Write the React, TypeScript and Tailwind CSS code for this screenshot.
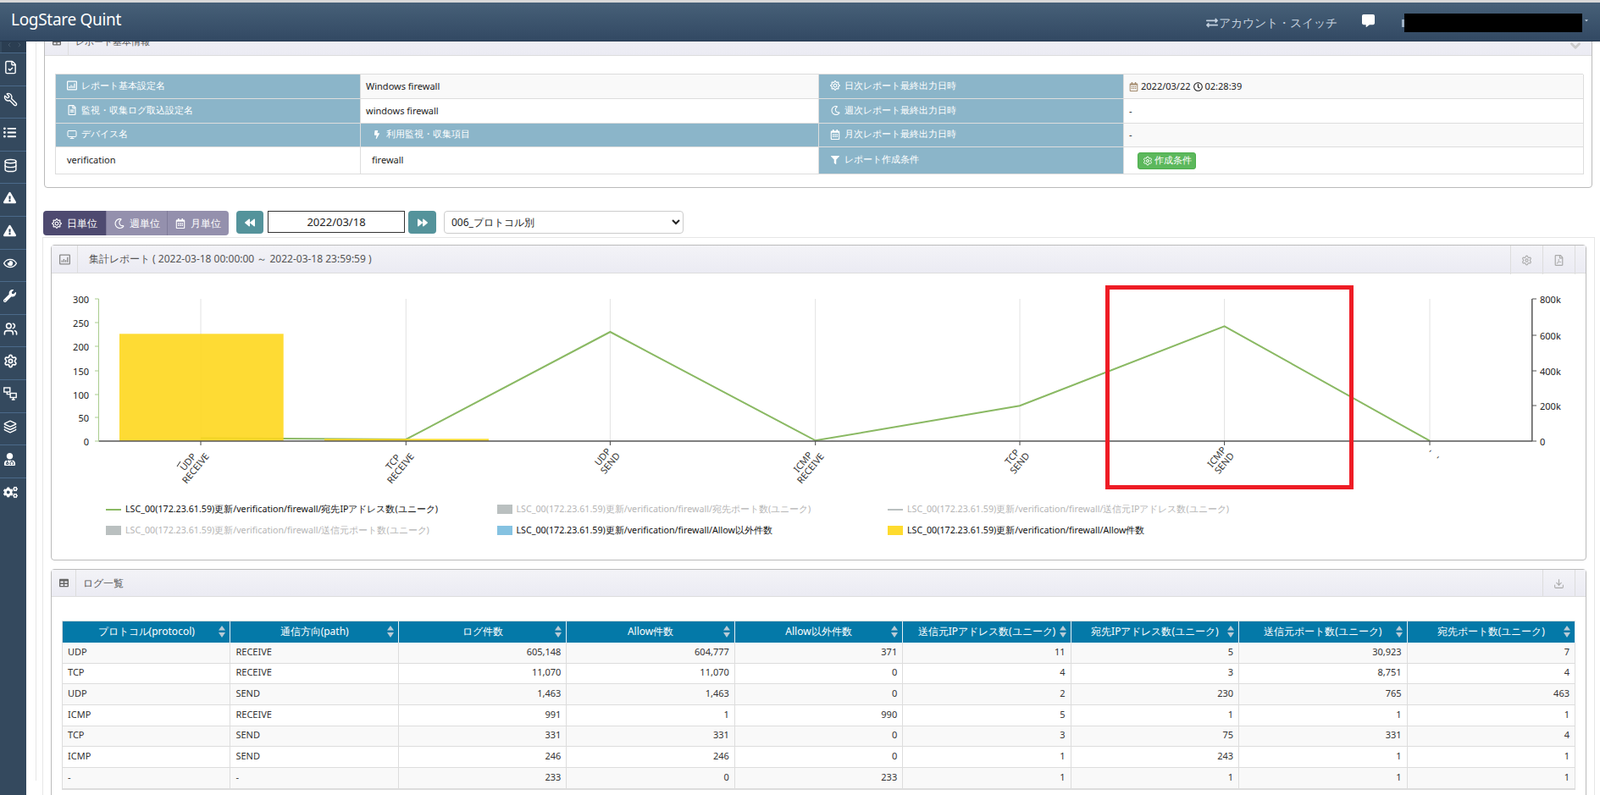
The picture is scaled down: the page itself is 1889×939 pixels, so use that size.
import React from "react";
import {
  FaRegSun, FaRegMoon, FaRegCalendarAlt, FaRegFileAlt, FaBolt, FaFilter, FaTable,
  FaRegFilePdf, FaRegClock, FaExchangeAlt, FaCommentAlt, FaBackward, FaForward, FaWrench, FaListUl,
  FaUserMd, FaCogs, FaCaretDown, FaExclamationTriangle, FaRegEye,
} from "react-icons/fa";
import { FileCheck, Wrench, Database, Users, Settings, Layers, Download, ChevronDown, ChevronLeft, ChevronRight, Monitor } from "lucide-react";

function ChartBox({ size = 12 }: { size?: number }) {
  return (
    <svg width={size} height={size} viewBox="0 0 12 12" fill="none">
      <rect x="0.6" y="1.1" width="10.8" height="9.8" rx="0.6" stroke="currentColor" strokeWidth="1.2" />
      <path d="M3 9V7M5 9V5.5M7 9V6.5M9 9V3.5" stroke="currentColor" strokeWidth="1.2" />
    </svg>
  );
}

function Monitors() {
  return (
    <svg width="16" height="16" viewBox="0 0 16 16" fill="none" stroke="currentColor" strokeWidth="1.4">
      <rect x="0.8" y="1" width="7" height="5" />
      <rect x="8.2" y="7.5" width="7" height="5" />
      <path d="M4.3 6v2.6H8M11.7 12.5v2M9.8 15h3.8" />
    </svg>
  );
}

const sideIcons = [
  <FileCheck size={17} strokeWidth={2} />,
  <Wrench size={17} strokeWidth={2} className="-scale-x-100" />,
  <FaListUl size={15} />,
  <Database size={17} strokeWidth={2} />,
  <FaExclamationTriangle size={15} />,
  <FaExclamationTriangle size={15} />,
  <FaRegEye size={16} />,
  <FaWrench size={15} />,
  <Users size={17} strokeWidth={2.2} />,
  <Settings size={17} strokeWidth={2.4} />,
  <Monitors />,
  <Layers size={16} strokeWidth={2.2} />,
  <FaUserMd size={15} />,
  <FaCogs size={17} />,
];

const ticks = [237, 479.3, 720.4, 962.7, 1204, 1445.6, 1688];
const xLabels: [string, string, number, number][] = [
  ["UDP", "RECEIVE", 226, 549],
  ["TCP", "RECEIVE", 468, 549],
  ["UDP", "SEND", 715.5, 543],
  ["ICMP", "RECEIVE", 952, 549],
  ["TCP", "SEND", 1199, 543],
  ["ICMP", "SEND", 1440.5, 543],
  ["-", "-", 1692, 535.5],
];
const leftTicks: [string, number][] = [["300", 353], ["250", 381], ["200", 409], ["150", 438], ["100", 466], ["50", 493], ["0", 521]];
const rightTicks: [string, number][] = [["800k", 353], ["600k", 396], ["400k", 438], ["200k", 479], ["0", 521]];

const legend: { t: string; on: boolean; kind: "line" | "box"; c: string }[] = [
  { t: "LSC_00(172.23.61.59)更新/verification/firewall/宛先IPアドレス数(ユニーク)", on: true, kind: "line", c: "#8ab963" },
  { t: "LSC_00(172.23.61.59)更新/verification/firewall/宛先ポート数(ユニーク)", on: false, kind: "box", c: "#bac0c0" },
  { t: "LSC_00(172.23.61.59)更新/verification/firewall/送信元IPアドレス数(ユニーク)", on: false, kind: "line", c: "#bac0c0" },
  { t: "LSC_00(172.23.61.59)更新/verification/firewall/送信元ポート数(ユニーク)", on: false, kind: "box", c: "#bac0c0" },
  { t: "LSC_00(172.23.61.59)更新/verification/firewall/Allow以外件数", on: true, kind: "box", c: "#85c2e1" },
  { t: "LSC_00(172.23.61.59)更新/verification/firewall/Allow件数", on: true, kind: "box", c: "#fedb2e" },
];

const cols = ["プロトコル(protocol)", "通信方向(path)", "ログ件数", "Allow件数", "Allow以外件数", "送信元IPアドレス数(ユニーク)", "宛先IPアドレス数(ユニーク)", "送信元ポート数(ユニーク)", "宛先ポート数(ユニーク)"];
const rows = [
  ["UDP", "RECEIVE", "605,148", "604,777", "371", "11", "5", "30,923", "7"],
  ["TCP", "RECEIVE", "11,070", "11,070", "0", "4", "3", "8,751", "4"],
  ["UDP", "SEND", "1,463", "1,463", "0", "2", "230", "765", "463"],
  ["ICMP", "RECEIVE", "991", "1", "990", "5", "1", "1", "1"],
  ["TCP", "SEND", "331", "331", "0", "3", "75", "331", "4"],
  ["ICMP", "SEND", "246", "246", "0", "1", "243", "1", "1"],
  ["-", "-", "233", "0", "233", "1", "1", "1", "1"],
];

function Sort() {
  return (
    <svg width="8" height="14" viewBox="0 0 8 14" className="absolute right-[5px] top-[5px]">
      <path d="M4 0 L8 5.5 H0 Z M4 14 L8 8 H0 Z" fill="#b9cbd6" />
    </svg>
  );
}

function Label({ icon, text, className = "" }: { icon: React.ReactNode; text: string; className?: string }) {
  return (
    <div className={"bg-[#8bb5c9] text-white flex items-center gap-[5px] pl-[13px] pb-[2px] border-r border-b border-[#ddd] " + className}>
      <span className="w-[12px] flex justify-center">{icon}</span>
      <span>{text}</span>
    </div>
  );
}

function PanelHeader({ icon, cellW }: { icon: React.ReactNode; cellW: string }) {
  return (
    <div className={"flex items-center text-[#555] " + cellW}>
      <span className="w-full flex justify-center">{icon}</span>
    </div>
  );
}

export default function App() {
  return (
    <div className="w-full h-[939px] overflow-hidden bg-white flex flex-col font-['Noto_Sans','Noto_Sans_CJK_JP',sans-serif] text-[11px] text-[#333]">
      <div className="h-[3px] bg-[#d9d9d9]" />
      <header className="h-[46px] shrink-0 bg-gradient-to-b from-[#476078] to-[#324963] border-b border-[#25374d] flex items-center relative z-10 text-white">
        <div className="pl-[13px] text-[19px] leading-none mt-[-5px] font-['Open_Sans',sans-serif] tracking-[-0.3px]">LogStare Quint</div>
        <div className="ml-auto flex items-center h-full">
          <div className="flex items-center text-[#c3d0de] text-[14.3px] leading-none mt-[3px]">
            <FaExchangeAlt size={14} className="mr-[1px]" />
            <span>アカウント・スイッチ</span>
          </div>
          <FaCommentAlt size={15} className="ml-[29px] mt-[-2px] text-white" />
          <div className="ml-[32px] w-[3px] h-[9px] bg-[#9fb2c6] mt-[3px]" />
          <div className="w-[210px] h-[22px] bg-black mt-[3px]" />
          <FaCaretDown size={6} className="ml-[2px] mr-[13px] mt-[-4px] text-[#c3d0de]" />
        </div>
      </header>

      <div className="flex-1 flex min-h-0">
        <nav className="w-[31px] shrink-0 bg-[#34495e] flex flex-col text-white">
          <div className="h-[13px] bg-[#2b3e52] w-[29px] ml-[2px] flex items-start justify-center text-[#56697d] overflow-hidden">
            <ChevronLeft size={8} />
            <ChevronRight size={8} className="ml-[4px]" />
          </div>
          {sideIcons.map((ic, i) => (
            <div key={i} className="h-[38.6px] shrink-0 border-t border-[#4b6a8a] flex items-center pl-[4px] pb-[5px]">
              {ic}
            </div>
          ))}
        </nav>

        <main className="flex-1 min-w-0 overflow-hidden pl-[11px]">
          <div className="border-l border-[#e6e6e6] h-full">
            {/* report base info */}
            <section className="mt-[-17px] ml-[9px] mr-[9px] h-[190px] border border-[#bbb] rounded-[4px] bg-white">
              <div className="h-[33px] bg-gradient-to-b from-[#f3f3f7] to-[#ebebf3] border-b border-[#ddd] flex items-center relative">
                <div className="w-[28px] h-full border-r border-[#ddd] flex items-center justify-center text-[#666]">
                  <FaTable size={10} />
                </div>
                <span className="pl-[8px] text-[#555]">レポート基本情報</span>
                <ChevronDown size={18} strokeWidth={4} className="absolute right-[10px] top-[12px] text-[#ccc]" />
              </div>
              <div className="mt-[21px] ml-[12px] w-[1804px] grid grid-cols-[360px_541px_360px_543px] grid-rows-[29px_29px_28px_32px] border-l border-t border-[#ddd] text-[#222]">
                <Label icon={<ChartBox size={12} />} text="レポート基本設定名" />
                <div className="bg-[#f9f9f9] border-r border-b border-[#ddd] flex items-center pl-[6px]">Windows firewall</div>
                <Label icon={<FaRegSun size={12} />} text="日次レポート最終出力日時" />
                <div className="bg-[#f9f9f9] border-r border-b border-[#ddd] flex items-center pl-[6px] gap-[3px]">
                  <FaRegCalendarAlt size={11} className="text-[#a38a6d]" />
                  <span>2022/03/22</span>
                  <FaRegClock size={11} className="text-[#222]" />
                  <span>02:28:39</span>
                </div>

                <Label icon={<FaRegFileAlt size={12} />} text="監視・収集ログ取込設定名" />
                <div className="bg-white border-r border-b border-[#ddd] flex items-center pl-[6px]">windows firewall</div>
                <Label icon={<FaRegMoon size={11} />} text="週次レポート最終出力日時" />
                <div className="bg-white border-r border-b border-[#ddd] flex items-center pl-[6px]">-</div>

                <Label icon={<Monitor size={12} strokeWidth={2} />} text="デバイス名" />
                <Label icon={<FaBolt size={10} />} text="利用監視・収集項目" className="pl-[7px]" />
                <Label icon={<FaRegCalendarAlt size={12} />} text="月次レポート最終出力日時" />
                <div className="bg-[#f9f9f9] border-r border-b border-[#ddd] flex items-center pl-[6px]">-</div>

                <div className="bg-white border-r border-b border-[#ddd] flex items-center pl-[13px]">verification</div>
                <div className="bg-white border-r border-b border-[#ddd] flex items-center pl-[13px]">firewall</div>
                <Label icon={<FaFilter size={10} />} text="レポート作成条件" />
                <div className="bg-white border-r border-b border-[#ddd] flex items-center pl-[16px]">
                  <span className="w-[69px] h-[20px] bg-[#5cb85c] border border-[#4cae4c] rounded-[3px] text-white flex items-center justify-center gap-[2px] text-[11px]">
                    <Settings size={12} />
                    作成条件
                  </span>
                </div>
              </div>
            </section>

            {/* controls */}
            <div className="mt-[27px] ml-[8px] flex items-start text-[12px] h-[31px]">
              <div className="flex h-[29px] rounded-[4px] overflow-hidden text-white">
                <div className="w-[74px] bg-[#4e4a70] flex items-center justify-center gap-[6px]"><FaRegSun size={12} />日単位</div>
                <div className="w-[72px] bg-[#9490ad] border-l border-[#7f7b9a] flex items-center justify-center gap-[6px]"><FaRegMoon size={12} />週単位</div>
                <div className="w-[73px] bg-[#9490ad] border-l border-[#7f7b9a] flex items-center justify-center gap-[6px]"><FaRegCalendarAlt size={12} />月単位</div>
              </div>
              <div className="ml-[9px] w-[32px] h-[27px] rounded-[4px] bg-[#54939b] text-white flex items-center justify-center"><FaBackward size={12} /></div>
              <input readOnly value="2022/03/18" className="ml-[5px] w-[162px] h-[26px] border border-[#333] bg-white text-center text-[13px] text-[#222] outline-none" />
              <div className="ml-[4px] w-[33px] h-[27px] rounded-[4px] bg-[#54939b] text-white flex items-center justify-center"><FaForward size={12} /></div>
              <select defaultValue="a" className="ml-[9px] w-[283px] h-[27px] border border-[#ccc] rounded-[4px] bg-white pl-[4px] text-[12px] text-[#222] outline-none">
                <option value="a">006_プロトコル別</option>
              </select>
            </div>

            {/* outer */}
            <div className="ml-[7px] mr-[6px] border border-[#e6e6e6] pt-[8px] pl-[9px] pr-[9px] h-[700px]">
              {/* chart */}
              <section className="h-[373px] border border-[#bbb] rounded-[4px] bg-white">
                <div className="h-[33px] bg-gradient-to-b from-[#f3f3f7] to-[#ebebf3] border-b border-[#ddd] flex items-center relative">
                  <PanelHeader icon={<ChartBox size={13} />} cellW="w-[31px] h-full border-r border-[#ddd] text-[#888]" />
                  <span className="pl-[13px] text-[12px] text-[#555]">集計レポート ( 2022-03-18 00:00:00 ～ 2022-03-18 23:59:59 )</span>
                  <div className="ml-auto h-full flex mr-[12px]">
                    <div className="w-[39px] h-[34px] border-l border-r border-[#ddd] flex items-center justify-center text-[#aaa]"><Settings size={13} /></div>
                    <div className="w-[38px] h-[34px] border-r border-[#ddd] flex items-center justify-center text-[#aaa]"><FaRegFilePdf size={13} /></div>
                  </div>
                </div>
                <div className="relative">
                  <svg width="1811" height="248" viewBox="61 323 1811 248" className="block overflow-visible">
                    {ticks.map((t) => (
                      <g key={t}>
                        <line x1={t} x2={t} y1={353} y2={521} stroke="#e2e2e2" />
                        <line x1={t} x2={t} y1={521} y2={526} stroke="#444" />
                      </g>
                    ))}
                    <polyline points="237,517.5 479.3,519 720.4,392 962.7,520.3 1204,479.3 1445.6,385.3 1688,520.7" fill="none" stroke="#8ab963" strokeWidth="2" />
                    <rect x="141" y="394.3" width="193.7" height="126.7" fill="#fed71e" fillOpacity="0.9" />
                    <rect x="383" y="518.3" width="194" height="2.7" fill="#fed71e" fillOpacity="0.9" />
                    <line x1="116.5" x2="1809" y1="521" y2="521" stroke="#555" strokeWidth="1.5" />
                    <line x1="116.5" x2="116.5" y1="353" y2="521" stroke="#a9cc8e" />
                    <line x1="1808.8" x2="1808.8" y1="353" y2="521" stroke="#555" strokeWidth="1.5" />
                    {leftTicks.map(([l, y]) => (
                      <g key={l}>
                        <line x1={112} x2={116.5} y1={y} y2={y} stroke="#a9cc8e" />
                        <text x={105} y={y} textAnchor="end" dominantBaseline="central" fontSize="11" fill="#222">{l}</text>
                      </g>
                    ))}
                    {rightTicks.map(([l, y]) => (
                      <g key={l}>
                        <line x1={1809} x2={1814} y1={y} y2={y} stroke="#555" />
                        <text x={1818} y={y} dominantBaseline="central" fontSize="11" fill="#222">{l}</text>
                      </g>
                    ))}
                    {xLabels.map(([a, b, x, y], i) => (
                      <g key={i} transform={`translate(${x} ${y}) rotate(-50)`} fontSize="11" fill="#333" textAnchor="middle">
                        <text x={0} y={-5.8} dominantBaseline="central">{a}</text>
                        <text x={0} y={5.8} dominantBaseline="central">{b}</text>
                      </g>
                    ))}
                    <line x1="209" x2="213" y1="551" y2="545" stroke="#222" strokeWidth="1" />
                  </svg>
                  <div className="absolute left-[1244px] top-[14px] w-[293px] h-[241px] border-[5px] border-[#ee1c25]" />
                  <div className="grid grid-cols-[461.5px_461.5px_1fr] pl-[64px] mt-[23px] gap-y-[10px] text-[10.7px]">
                    {legend.map((l) => (
                      <div key={l.t} className={"flex items-center h-[15px] " + (l.on ? "text-[#111]" : "text-[#b5b5b5]")}>
                        {l.kind === "line" ? (
                          <span className="w-[18px] h-[2px] mr-[5px]" style={{ background: l.c }} />
                        ) : (
                          <span className="w-[18px] h-[11px] mr-[5px]" style={{ background: l.c }} />
                        )}
                        <span>{l.t}</span>
                      </div>
                    ))}
                  </div>
                </div>
              </section>

              {/* log */}
              <section className="mt-[10px] h-[400px] border border-[#bbb] rounded-[4px] bg-white">
                <div className="h-[32px] bg-gradient-to-b from-[#f3f3f7] to-[#ebebf3] border-b border-[#ddd] flex items-center relative">
                  <PanelHeader icon={<FaTable size={11} className="text-[#666]" />} cellW="w-[29px] h-full border-r border-[#ddd]" />
                  <span className="pl-[8px] text-[12px] text-[#555]">ログ一覧</span>
                  <div className="ml-auto h-full flex mr-[12px]">
                    <div className="w-[39px] h-[32px] border-l border-r border-[#ddd] flex items-center justify-center text-[#aaa]"><Download size={13} /></div>
                  </div>
                </div>
                <div className="mt-[28px] ml-[12px] w-[1787px] border-t border-l border-[#ddd]">
                  <div className="grid grid-cols-9 h-[25px] bg-[#0479a8] text-white text-[12px]">
                    {cols.map((c) => (
                      <div key={c} className="relative flex items-center justify-center border-r border-[#e6f0f5] pb-[2px]">
                        <span>{c}</span>
                        <Sort />
                      </div>
                    ))}
                  </div>
                  {rows.map((r, i) => (
                    <div key={i} className={"grid grid-cols-9 h-[24.7px] " + (i % 2 === 0 ? "bg-[#f9f9f9]" : "bg-white")}>
                      {r.map((v, j) => (
                        <div key={j} className={"border-r border-b border-[#ddd] flex items-center px-[6px] pb-[2px] " + (j < 2 ? "justify-start" : "justify-end")}>
                          {v}
                        </div>
                      ))}
                    </div>
                  ))}
                  <div className="h-[1px] bg-[#ddd]" />
                </div>
              </section>
            </div>
          </div>
        </main>
      </div>
    </div>
  );
}
